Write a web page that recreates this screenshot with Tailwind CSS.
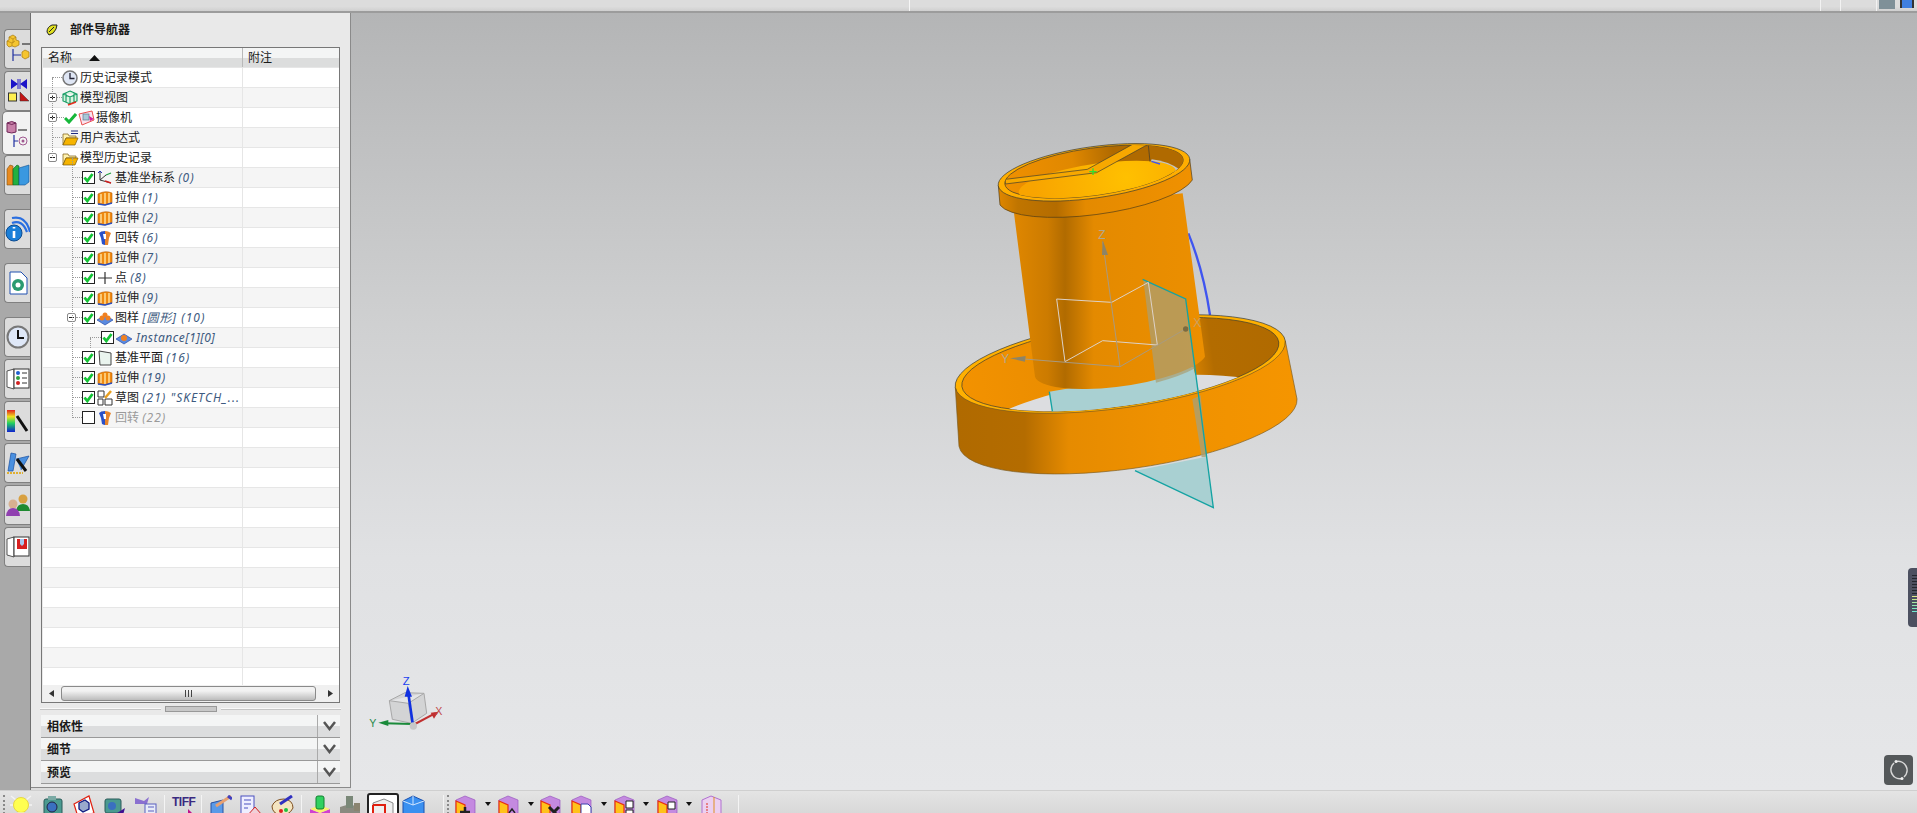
<!DOCTYPE html>
<html lang="zh">
<head>
<meta charset="UTF-8" />
<title>部件导航器</title>
<script src="https://cdn.jsdelivr.net/npm/@tailwindcss/browser@4"></script>
</head>
<body class="w-[1917px] h-[813px] overflow-hidden flex flex-col bg-[#dcdcdc] text-[12px] leading-[16px] text-[#1a1a1a] font-['Noto_Sans','Noto_Sans_CJK_SC',sans-serif]">

<!-- shared icons -->
<svg class="hidden">
  <symbol id="chk" viewBox="0 0 13 13"><rect x=".5" y=".5" width="12" height="12" fill="#fff" stroke="#222"/><path d="M2.500 6.500 5.300 10 10.500 3" fill="none" stroke="#14c436" stroke-width="2.800"/></symbol>
  <symbol id="ext" viewBox="0 0 16 16"><path d="M1 4Q8 0 15 3V13L8 15 1 14Z" fill="#f08a10" stroke="#b85a00" stroke-width=".6"/><path d="M4 4V13M8 3V14M12 3V13" stroke="#ffe3a0" stroke-width="1.400"/><path d="M1 14 8 15 15 13" stroke="#2a50c0" stroke-width="1.600" fill="none"/></symbol>
  <symbol id="rev" viewBox="0 0 16 16"><path d="M2 3Q8 -1 14 3L12 8 11 15H8V1Q4 1 2 3Z" fill="#e8842a"/><path d="M2 3 4 8 5 14Q7 15 8 15V1Q4 1 2 3Z" fill="#2a50c8"/><path d="M6 4H9V9H7Z" fill="#fff"/></symbol>
  <symbol id="plus" viewBox="0 0 9 9"><rect x=".5" y=".5" width="8" height="8" rx="1.500" fill="#fff" stroke="#888"/><path d="M2 4.500H7M4.500 2V7" stroke="#222"/></symbol>
  <symbol id="minus" viewBox="0 0 9 9"><rect x=".5" y=".5" width="8" height="8" rx="1.500" fill="#fff" stroke="#888"/><path d="M2 4.500H7" stroke="#222"/></symbol>
  <symbol id="folder" viewBox="0 0 17 16"><path d="M1 15V4H6L7 6H14V8H4L1 15Z" fill="#fff2b0" stroke="#7a5a10" stroke-width=".7"/><path d="M1 15 4 8H16L13 15Z" fill="#f6b400" stroke="#7a5a10" stroke-width=".7"/></symbol>
  <symbol id="tb" viewBox="0 0 22 22"><path d="M11 1 21 5V18L11 22 2 18V5Z" fill="#c48ae0" stroke="#9a58c0" stroke-width=".7"/><path d="M2 6 11 10V22L2 18Z" fill="#ffc21a" stroke="#e83010" stroke-width="1.200"/></symbol>
</svg>

<!-- top bar -->
<header class="h-[13px] shrink-0 flex bg-[linear-gradient(#dcdcdc_60%,#cfcfcf)] border-b-2 border-[#9c9c9c]">
  <div class="w-[1px] ml-[909px] bg-[#f6f6f6]"></div>
  <div class="w-[1px] ml-[910px] bg-[#f2f2f2]"></div>
  <div class="w-[1px] ml-[19px] bg-[#f2f2f2]"></div>
  <div class="w-[1px] ml-[35px] bg-[#f2f2f2]"></div>
  <div class="w-[16px] h-[9px] ml-[2px] bg-[#7f9098]"></div>
  <div class="w-[14px] h-[8px] ml-[5px] bg-[#3f7fe0] border-x-2 border-[#333]"></div>
</header>

<div class="flex-1 flex min-h-0">
  <!-- tab strip -->
  <nav class="w-[31px] shrink-0 pt-[16px] pb-[3px] pl-[4px] bg-[#a9a9a9] border-r border-[#6f6f6f] flex flex-col">
    <div class="h-[40px] w-[26px] mb-[2px] rounded-l-[4px] border border-r-0 border-[#808080] bg-[#dcdcdc] flex items-center justify-center">
      <svg width="24" height="30" viewBox="0 0 24 30"><path d="M3 3 7 1 10 3V6L13 7V11L9 13 6 12 3 13 1 11V7L3 6Z" fill="#f5c530" stroke="#a87a10" stroke-width=".7"/><path d="M3 3 7 5 10 3M7 5V9M1 7 6 9 9 7M6 9V12" fill="none" stroke="#a87a10" stroke-width=".6"/><path d="M7 15V27M7 21H15" stroke="#2030a0" stroke-width="1.200"/><path d="M16 18 19 16 23 18V23L19 25 16 23Z" fill="#f5c530" stroke="#a87a10" stroke-width=".7"/><path d="M16 10H24" stroke="#111"/></svg>
    </div>
    <div class="h-[40px] w-[26px] rounded-l-[4px] border border-r-0 border-[#808080] bg-[#dcdcdc] flex items-center justify-center">
      <svg width="24" height="26" viewBox="0 0 24 26"><path d="M5 1V11L12 6ZM21 1V11L14 6Z" fill="#1c14c8"/><path d="M12 1V11M14 1V11" stroke="#1c14c8"/><rect x="2.500" y="15" width="8" height="8" fill="#fff050" stroke="#333"/><path d="M14 14 23 23H14Z" fill="#c41414" stroke="#333" stroke-width=".5"/></svg>
    </div>
    <div class="h-[44px] w-[28px] -ml-[2px] -mr-[1px] relative rounded-l-[5px] border border-r-0 border-[#808080] bg-[#f2f2f2] flex items-center justify-center">
      <svg width="24" height="28" viewBox="0 0 24 28"><path d="M2 4Q7 1 11 4V13Q7 15 2 13Z" fill="#c880a8" stroke="#702858"/><path d="M2 4Q7 7 11 4" stroke="#702858" fill="none"/><path d="M13 11H22" stroke="#111"/><path d="M9 16V28M9 22H13" stroke="#2030a0" stroke-width="1.200"/><circle cx="18" cy="22" r="4" fill="none" stroke="#a05890"/><circle cx="18" cy="22" r="1.500" fill="#a05890"/></svg>
    </div>
    <div class="h-[40px] w-[26px] rounded-l-[4px] border border-r-0 border-[#808080] bg-[#dcdcdc] flex items-center justify-center">
      <svg width="24" height="24" viewBox="0 0 24 24"><path d="M1 6 4 2 7 3V22H1Z" fill="#e88a20" stroke="#805010" stroke-width=".6"/><path d="M7 6 11 2 13 3V22H7Z" fill="#22b040" stroke="#106020" stroke-width=".6"/><path d="M13 5 23 2V19L19 22H13Z" fill="#3a98e0" stroke="#105090" stroke-width=".6"/></svg>
    </div>
    <div class="h-[40px] w-[26px] mt-[14px] rounded-l-[4px] border border-r-0 border-[#808080] bg-[#dcdcdc] flex items-center justify-center">
      <svg width="25" height="26" viewBox="0 0 25 26"><path d="M7 7Q17 3 22 16M7 2Q21 -1 25 16" fill="none" stroke="#2a6fe0" stroke-width="2.200"/><circle cx="9" cy="17" r="8" fill="#1a7fd8" stroke="#0c4a90"/><path d="M9 11V12.500M9 15V22" stroke="#fff" stroke-width="2.600"/></svg>
    </div>
    <div class="h-[40px] w-[26px] mt-[14px] rounded-l-[4px] border border-r-0 border-[#808080] bg-[#dcdcdc] flex items-center justify-center">
      <svg width="20" height="24" viewBox="0 0 20 24"><path d="M2 1H13L19 7V23H2Z" fill="#fff" stroke="#2050b0"/><circle cx="10" cy="14" r="6" fill="#2a9a70"/><circle cx="10" cy="14" r="2.500" fill="#fff"/></svg>
    </div>
    <div class="h-[40px] w-[26px] mt-[14px] rounded-l-[4px] border border-r-0 border-[#808080] bg-[#dcdcdc] flex items-center justify-center">
      <svg width="24" height="24" viewBox="0 0 24 24"><circle cx="12" cy="12" r="10.500" fill="#dfe8f8" stroke="#777" stroke-width="2"/><path d="M12 5V13H18" fill="none" stroke="#111" stroke-width="2"/></svg>
    </div>
    <div class="h-[40px] w-[26px] mt-[2px] rounded-l-[4px] border border-r-0 border-[#808080] bg-[#dcdcdc] flex items-center justify-center">
      <svg width="24" height="22" viewBox="0 0 24 22"><path d="M1 3 8 1V21L1 19Z" fill="#fff" stroke="#555"/><rect x="8" y="1" width="15" height="19" fill="#fff" stroke="#333"/><circle cx="12" cy="5" r="2" fill="#2060d0"/><circle cx="12" cy="10" r="2" fill="#30a040"/><circle cx="12" cy="15" r="2" fill="#d02020"/><path d="M16 5H21M16 10H21M16 15H21" stroke="#333"/></svg>
    </div>
    <div class="h-[40px] w-[26px] mt-[2px] rounded-l-[4px] border border-r-0 border-[#808080] bg-[#dcdcdc] flex items-center justify-center">
      <svg width="24" height="24" viewBox="0 0 24 24"><defs><linearGradient id="rb" x1="0" y1="0" x2="0" y2="1"><stop offset="0" stop-color="#e02020"/><stop offset=".3" stop-color="#f0e020"/><stop offset=".6" stop-color="#20d060"/><stop offset="1" stop-color="#1020d0"/></linearGradient></defs><rect x="1" y="1" width="8" height="22" fill="url(#rb)"/><path d="M11 7 21 22" stroke="#111" stroke-width="3"/></svg>
    </div>
    <div class="h-[40px] w-[26px] mt-[2px] rounded-l-[4px] border border-r-0 border-[#808080] bg-[#dcdcdc] flex items-center justify-center">
      <svg width="24" height="24" viewBox="0 0 24 24"><path d="M5 2 10 3 7 20H2ZM10 8 23 5 15 19" fill="#4a90e0" stroke="#1a50a0" stroke-width=".7"/><path d="M1 22H17" stroke="#e0b030" stroke-dasharray="2 1" stroke-width="2"/><path d="M11 8 20 20" stroke="#111" stroke-width="3"/></svg>
    </div>
    <div class="h-[40px] w-[26px] mt-[2px] rounded-l-[4px] border border-r-0 border-[#808080] bg-[#dcdcdc] flex items-center justify-center">
      <svg width="24" height="24" viewBox="0 0 24 24"><circle cx="17" cy="6" r="4.500" fill="#d8a040"/><path d="M10 18Q11 11 17 11 23 11 24 18Z" fill="#1e8a30"/><circle cx="7" cy="11" r="4.500" fill="#d8b090"/><path d="M0 23Q1 15 7 15 13 15 14 23Z" fill="#9040b0"/></svg>
    </div>
    <div class="h-[40px] w-[26px] mt-[2px] rounded-l-[4px] border border-r-0 border-[#808080] bg-[#dcdcdc] flex items-center justify-center">
      <svg width="24" height="22" viewBox="0 0 24 22"><path d="M1 3 8 1V21L1 19Z" fill="#fff" stroke="#555"/><rect x="8" y="1" width="15" height="19" fill="#fff" stroke="#333"/><rect x="11" y="3" width="10" height="10" fill="#d82020"/><path d="M14 3H18V8L16 10 14 8Z" fill="#a8c8f0"/></svg>
    </div>
  </nav>

  <!-- part navigator panel -->
  <aside class="w-[320px] shrink-0 mb-[2px] px-[10px] bg-[#e9e9e9] border-b border-r border-[#8a8a8a] flex flex-col">
    <div class="h-[34px] shrink-0 flex items-center pl-[5px] font-bold">
      <svg width="12" height="12" viewBox="0 0 12 12"><path d="M1 8Q1 3 6 1L11 1 10 5Q8 10 3 11Z" fill="#e0e020" stroke="#222"/><path d="M3 8 8 3" stroke="#222"/></svg>
      <span class="ml-[12px]">部件导航器</span>
    </div>

    <div class="h-[656px] shrink-0 border border-[#777] flex flex-col pl-[1px]">
      <div class="h-[20px] shrink-0 flex bg-[linear-gradient(#f4f5f5_55%,#dcdddd_55%)] border-b border-[#e6e6e6]">
        <div class="w-[199px] flex items-center pl-[5px]">名称
          <svg class="ml-[17px]" width="11" height="6" viewBox="0 0 11 6"><path d="M5.500 0 11 6H0Z" fill="#111"/></svg>
        </div>
        <div class="flex-1 border-l border-[#b9b9b9] pl-[5px] flex items-center">附注</div>
      </div>

      <div class="h-[617px] shrink-0 overflow-hidden relative">
        <!-- tree guide lines -->
        <div class="absolute left-[9px] top-[10px] h-[80px] border-l border-dotted border-[#999]"></div>
        <div class="absolute left-[29px] top-[90px] h-[260px] border-l border-dotted border-[#999]"></div>
        <div class="absolute left-[47px] top-[270px] h-[10px] border-l border-dotted border-[#999]"></div>

        <div class="h-[20px] flex bg-white border-b border-[#e6e6e6]"><div class="w-[199px] flex items-center pl-[9px]"><div class="w-[10px] border-t border-dotted border-[#999]"></div><svg width="16" height="16" viewBox="0 0 16 16"><circle cx="8" cy="8" r="7" fill="#dfe6f4" stroke="#777" stroke-width="1.500"/><path d="M8 3V8.500H12.500" fill="none" stroke="#223" stroke-width="1.300"/></svg><span class="ml-[2px]">历史记录模式</span></div><div class="flex-1 border-l border-[#e6e6e6]"></div></div>
        <div class="h-[20px] flex bg-[#f5f5f5] border-b border-[#e6e6e6]"><div class="w-[199px] flex items-center pl-[5px]"><svg width="9" height="9"><use href="#plus"/></svg><div class="w-[5px] border-t border-dotted border-[#999]"></div><svg width="17" height="16" viewBox="0 0 17 16"><path d="M8 1 15 4V11L8 14 1 11V4ZM1 4 8 7 15 4M8 7V14M4 2.500V12.500M12 2.500V12.500" fill="#d8f4e0" stroke="#109a60" stroke-width="1.100"/><path d="M6 15 14 12" stroke="#e83020" stroke-width="1.500"/></svg><span class="ml-[1px]">模型视图</span></div><div class="flex-1 border-l border-[#e6e6e6]"></div></div>
        <div class="h-[20px] flex bg-white border-b border-[#e6e6e6]"><div class="w-[199px] flex items-center pl-[5px]"><svg width="9" height="9"><use href="#plus"/></svg><div class="w-[7px] border-t border-dotted border-[#999]"></div><svg width="13" height="12" viewBox="0 0 13 12"><path d="M1 6 5 10 12 2" fill="none" stroke="#16b83a" stroke-width="3"/></svg><svg class="ml-[1px]" width="17" height="16" viewBox="0 0 17 16"><path d="M1 4 14 1 16 10 4 15Z" fill="#fbe3ee" stroke="#e85050"/><rect x="5" y="4" width="6" height="6" fill="#a8c8d8" stroke="#607890" stroke-width=".7"/><path d="M11 6 16 9 12 11Z" fill="#d020a0"/></svg><span class="ml-[1px]">摄像机</span></div><div class="flex-1 border-l border-[#e6e6e6]"></div></div>
        <div class="h-[20px] flex bg-[#f5f5f5] border-b border-[#e6e6e6]"><div class="w-[199px] flex items-center pl-[9px]"><div class="w-[10px] border-t border-dotted border-[#999]"></div><svg width="17" height="16" viewBox="0 0 17 16"><use href="#folder"/><path d="M9 1H16M9 3.500H16" stroke="#202a80"/></svg><span class="ml-[1px]">用户表达式</span></div><div class="flex-1 border-l border-[#e6e6e6]"></div></div>
        <div class="h-[20px] flex bg-white border-b border-[#e6e6e6]"><div class="w-[199px] flex items-center pl-[5px]"><svg width="9" height="9"><use href="#minus"/></svg><div class="w-[5px]"></div><svg width="17" height="16"><use href="#folder"/></svg><span class="ml-[1px]">模型历史记录</span></div><div class="flex-1 border-l border-[#e6e6e6]"></div></div>

        <div class="h-[20px] flex bg-[#f5f5f5] border-b border-[#e6e6e6]"><div class="w-[199px] flex items-center pl-[29px]"><div class="w-[10px] border-t border-dotted border-[#999]"></div><svg width="13" height="13"><use href="#chk"/></svg><svg class="ml-[2px]" width="16" height="16" viewBox="0 0 16 16"><path d="M3 1V10L14 13M3 10 9 5" fill="none" stroke="#333"/><path d="M9 5 14 3" stroke="#20a040" stroke-width="1.200"/><path d="M3 1 1 3M3 1 5 3" stroke="#2030c0"/><path d="M8 11 14 13" stroke="#d02020" stroke-width="1.500"/></svg><span class="ml-[2px]">基准坐标系 <em class="text-[#3d5a80] tracking-[1px]">(0)</em></span></div><div class="flex-1 border-l border-[#e6e6e6]"></div></div>
        <div class="h-[20px] flex bg-white border-b border-[#e6e6e6]"><div class="w-[199px] flex items-center pl-[29px]"><div class="w-[10px] border-t border-dotted border-[#999]"></div><svg width="13" height="13"><use href="#chk"/></svg><svg class="ml-[2px]" width="16" height="16"><use href="#ext"/></svg><span class="ml-[2px]">拉伸 <em class="text-[#3d5a80] tracking-[1px]">(1)</em></span></div><div class="flex-1 border-l border-[#e6e6e6]"></div></div>
        <div class="h-[20px] flex bg-[#f5f5f5] border-b border-[#e6e6e6]"><div class="w-[199px] flex items-center pl-[29px]"><div class="w-[10px] border-t border-dotted border-[#999]"></div><svg width="13" height="13"><use href="#chk"/></svg><svg class="ml-[2px]" width="16" height="16"><use href="#ext"/></svg><span class="ml-[2px]">拉伸 <em class="text-[#3d5a80] tracking-[1px]">(2)</em></span></div><div class="flex-1 border-l border-[#e6e6e6]"></div></div>
        <div class="h-[20px] flex bg-white border-b border-[#e6e6e6]"><div class="w-[199px] flex items-center pl-[29px]"><div class="w-[10px] border-t border-dotted border-[#999]"></div><svg width="13" height="13"><use href="#chk"/></svg><svg class="ml-[2px]" width="16" height="16"><use href="#rev"/></svg><span class="ml-[2px]">回转 <em class="text-[#3d5a80] tracking-[1px]">(6)</em></span></div><div class="flex-1 border-l border-[#e6e6e6]"></div></div>
        <div class="h-[20px] flex bg-[#f5f5f5] border-b border-[#e6e6e6]"><div class="w-[199px] flex items-center pl-[29px]"><div class="w-[10px] border-t border-dotted border-[#999]"></div><svg width="13" height="13"><use href="#chk"/></svg><svg class="ml-[2px]" width="16" height="16"><use href="#ext"/></svg><span class="ml-[2px]">拉伸 <em class="text-[#3d5a80] tracking-[1px]">(7)</em></span></div><div class="flex-1 border-l border-[#e6e6e6]"></div></div>
        <div class="h-[20px] flex bg-white border-b border-[#e6e6e6]"><div class="w-[199px] flex items-center pl-[29px]"><div class="w-[10px] border-t border-dotted border-[#999]"></div><svg width="13" height="13"><use href="#chk"/></svg><svg class="ml-[2px]" width="16" height="16" viewBox="0 0 16 16"><path d="M8 2V14M1 8H15" stroke="#333" stroke-width="1.200"/></svg><span class="ml-[2px]">点 <em class="text-[#3d5a80] tracking-[1px]">(8)</em></span></div><div class="flex-1 border-l border-[#e6e6e6]"></div></div>
        <div class="h-[20px] flex bg-[#f5f5f5] border-b border-[#e6e6e6]"><div class="w-[199px] flex items-center pl-[29px]"><div class="w-[10px] border-t border-dotted border-[#999]"></div><svg width="13" height="13"><use href="#chk"/></svg><svg class="ml-[2px]" width="16" height="16"><use href="#ext"/></svg><span class="ml-[2px]">拉伸 <em class="text-[#3d5a80] tracking-[1px]">(9)</em></span></div><div class="flex-1 border-l border-[#e6e6e6]"></div></div>
        <div class="h-[20px] flex bg-white border-b border-[#e6e6e6]"><div class="w-[199px] flex items-center pl-[24px]"><svg width="9" height="9"><use href="#minus"/></svg><div class="w-[6px] border-t border-dotted border-[#999]"></div><svg width="13" height="13"><use href="#chk"/></svg><svg class="ml-[2px]" width="16" height="16" viewBox="0 0 16 16"><path d="M0 10 8 5 16 10 8 15Z" fill="#5a8ae0" stroke="#1a40a0" stroke-width=".6"/><circle cx="5" cy="8" r="2.500" fill="#f08020"/><circle cx="11" cy="8" r="2.500" fill="#f08020"/><circle cx="8" cy="5" r="2.500" fill="#f08020"/></svg><span class="ml-[2px]">图样 <em class="text-[#3d5a80] tracking-[1px]">[圆形] (10)</em></span></div><div class="flex-1 border-l border-[#e6e6e6]"></div></div>
        <div class="h-[20px] flex bg-[#f5f5f5] border-b border-[#e6e6e6]"><div class="w-[199px] flex items-center pl-[47px]"><div class="w-[11px] border-t border-dotted border-[#999]"></div><svg width="13" height="13"><use href="#chk"/></svg><svg class="ml-[2px]" width="16" height="16" viewBox="0 0 16 16"><path d="M0 9 8 4 16 9 8 14Z" fill="#5a8ae0" stroke="#1a40a0" stroke-width=".6"/><circle cx="8" cy="8" r="3" fill="#f08020"/></svg><em class="ml-[4px] text-[#3d5a80] tracking-[.5px]">Instance[1][0]</em></div><div class="flex-1 border-l border-[#e6e6e6]"></div></div>
        <div class="h-[20px] flex bg-white border-b border-[#e6e6e6]"><div class="w-[199px] flex items-center pl-[29px]"><div class="w-[10px] border-t border-dotted border-[#999]"></div><svg width="13" height="13"><use href="#chk"/></svg><svg class="ml-[2px]" width="16" height="16" viewBox="0 0 16 16"><path d="M2 1 14 3V15H3Z" fill="#eaf4ee" stroke="#444"/></svg><span class="ml-[2px]">基准平面 <em class="text-[#3d5a80] tracking-[1px]">(16)</em></span></div><div class="flex-1 border-l border-[#e6e6e6]"></div></div>
        <div class="h-[20px] flex bg-[#f5f5f5] border-b border-[#e6e6e6]"><div class="w-[199px] flex items-center pl-[29px]"><div class="w-[10px] border-t border-dotted border-[#999]"></div><svg width="13" height="13"><use href="#chk"/></svg><svg class="ml-[2px]" width="16" height="16"><use href="#ext"/></svg><span class="ml-[2px]">拉伸 <em class="text-[#3d5a80] tracking-[1px]">(19)</em></span></div><div class="flex-1 border-l border-[#e6e6e6]"></div></div>
        <div class="h-[20px] flex bg-white border-b border-[#e6e6e6]"><div class="w-[199px] flex items-center pl-[29px]"><div class="w-[10px] border-t border-dotted border-[#999]"></div><svg width="13" height="13"><use href="#chk"/></svg><svg class="ml-[2px]" width="16" height="16" viewBox="0 0 16 16"><path d="M1 1H7V7H1ZM1 9H6V15H1ZM8 9H15V15H8Z" fill="#fff" stroke="#333"/><path d="M8 8 14 1" stroke="#e8a020" stroke-width="2.500"/></svg><span class="ml-[2px] whitespace-nowrap">草图 <em class="text-[#3d5a80] tracking-[1px]">(21) "SKETCH_...</em></span></div><div class="flex-1 border-l border-[#e6e6e6]"></div></div>
        <div class="h-[20px] flex bg-[#f5f5f5] border-b border-[#e6e6e6]"><div class="w-[199px] flex items-center pl-[29px]"><div class="w-[10px] border-t border-dotted border-[#999]"></div><svg width="13" height="13" viewBox="0 0 13 13"><rect x=".5" y=".5" width="12" height="12" fill="#fff" stroke="#222"/></svg><svg class="ml-[2px]" width="16" height="16"><use href="#rev"/></svg><span class="ml-[2px] text-[#9a9a9a]">回转 <em class="tracking-[1px]">(22)</em></span></div><div class="flex-1 border-l border-[#e6e6e6]"></div></div>

        <div class="h-[20px] flex bg-white border-b border-[#e6e6e6]"><div class="w-[199px]"></div><div class="flex-1 border-l border-[#e6e6e6]"></div></div>
        <div class="h-[20px] flex bg-[#f5f5f5] border-b border-[#e6e6e6]"><div class="w-[199px]"></div><div class="flex-1 border-l border-[#e6e6e6]"></div></div>
        <div class="h-[20px] flex bg-white border-b border-[#e6e6e6]"><div class="w-[199px]"></div><div class="flex-1 border-l border-[#e6e6e6]"></div></div>
        <div class="h-[20px] flex bg-[#f5f5f5] border-b border-[#e6e6e6]"><div class="w-[199px]"></div><div class="flex-1 border-l border-[#e6e6e6]"></div></div>
        <div class="h-[20px] flex bg-white border-b border-[#e6e6e6]"><div class="w-[199px]"></div><div class="flex-1 border-l border-[#e6e6e6]"></div></div>
        <div class="h-[20px] flex bg-[#f5f5f5] border-b border-[#e6e6e6]"><div class="w-[199px]"></div><div class="flex-1 border-l border-[#e6e6e6]"></div></div>
        <div class="h-[20px] flex bg-white border-b border-[#e6e6e6]"><div class="w-[199px]"></div><div class="flex-1 border-l border-[#e6e6e6]"></div></div>
        <div class="h-[20px] flex bg-[#f5f5f5] border-b border-[#e6e6e6]"><div class="w-[199px]"></div><div class="flex-1 border-l border-[#e6e6e6]"></div></div>
        <div class="h-[20px] flex bg-white border-b border-[#e6e6e6]"><div class="w-[199px]"></div><div class="flex-1 border-l border-[#e6e6e6]"></div></div>
        <div class="h-[20px] flex bg-[#f5f5f5] border-b border-[#e6e6e6]"><div class="w-[199px]"></div><div class="flex-1 border-l border-[#e6e6e6]"></div></div>
        <div class="h-[20px] flex bg-white border-b border-[#e6e6e6]"><div class="w-[199px]"></div><div class="flex-1 border-l border-[#e6e6e6]"></div></div>
        <div class="h-[20px] flex bg-[#f5f5f5] border-b border-[#e6e6e6]"><div class="w-[199px]"></div><div class="flex-1 border-l border-[#e6e6e6]"></div></div>
        <div class="h-[20px] flex bg-white"><div class="w-[199px]"></div><div class="flex-1 border-l border-[#e6e6e6]"></div></div>
      </div>

      <!-- horizontal scrollbar -->
      <div class="flex-1 flex items-center bg-[#f0f0f0]">
        <svg class="ml-[6px]" width="5" height="7" viewBox="0 0 5 7"><path d="M5 0V7L0 3.500Z" fill="#333"/></svg>
        <div class="ml-[7px] w-[255px] h-[15px] rounded-[3px] border border-[#8a8a8a] bg-[linear-gradient(#f2f2f2_30%,#bcbcbc)] flex items-center justify-center gap-[2px]">
          <div class="w-[1px] h-[7px] bg-[#444]"></div><div class="w-[1px] h-[7px] bg-[#444]"></div><div class="w-[1px] h-[7px] bg-[#444]"></div>
        </div>
        <svg class="ml-[12px]" width="5" height="7" viewBox="0 0 5 7"><path d="M0 0V7L5 3.500Z" fill="#333"/></svg>
      </div>
    </div>

    <!-- sash -->
    <div class="h-[12px] shrink-0 -mx-[1px] flex items-center">
      <div class="flex-1 h-[2px] bg-[#f8f8f8] border-b border-[#c4c4c4]"></div>
      <div class="w-[52px] h-[6px] mx-[4px] bg-[#c8c8c8] border border-[#999]"></div>
      <div class="flex-1 h-[2px] bg-[#f8f8f8] border-b border-[#c4c4c4]"></div>
    </div>

    <div class="h-[23px] shrink-0 flex border-b border-[#999] bg-[linear-gradient(#f4f5f5_50%,#dcddde_50%)] font-bold">
      <div class="flex-1 pl-[6px] pt-[2px] flex items-center">相依性</div>
      <div class="w-[23px] border-l border-[#aaa] flex items-center justify-center"><svg width="13" height="10" viewBox="0 0 13 10"><path d="M1 1 6.500 8 12 1" fill="none" stroke="#555" stroke-width="2.500"/></svg></div>
    </div>
    <div class="h-[23px] shrink-0 flex border-b border-[#999] bg-[linear-gradient(#f4f5f5_50%,#dcddde_50%)] font-bold">
      <div class="flex-1 pl-[6px] pt-[2px] flex items-center">细节</div>
      <div class="w-[23px] border-l border-[#aaa] flex items-center justify-center"><svg width="13" height="10" viewBox="0 0 13 10"><path d="M1 1 6.500 8 12 1" fill="none" stroke="#555" stroke-width="2.500"/></svg></div>
    </div>
    <div class="h-[23px] shrink-0 flex border-b border-[#999] bg-[linear-gradient(#f4f5f5_50%,#dcddde_50%)] font-bold">
      <div class="flex-1 pl-[6px] pt-[2px] flex items-center">预览</div>
      <div class="w-[23px] border-l border-[#aaa] flex items-center justify-center"><svg width="13" height="10" viewBox="0 0 13 10"><path d="M1 1 6.500 8 12 1" fill="none" stroke="#555" stroke-width="2.500"/></svg></div>
    </div>
  </aside>

  <!-- graphics window -->
  <main class="flex-1 relative bg-[linear-gradient(#b4b5b6,#cfd0d1_40%,#e0e1e3_70%,#e6e7e9)]">
    <svg class="absolute left-[579px] top-[107px]" width="400" height="400" viewBox="0 0 1200 1200">
      <defs>
        <linearGradient id="band" gradientUnits="userSpaceOnUse" x1="80" y1="0" x2="1100" y2="0"><stop offset="0" stop-color="#b06a00"/><stop offset=".2" stop-color="#b46c00"/><stop offset=".33" stop-color="#e68b00"/><stop offset=".6" stop-color="#ef9100"/><stop offset="1" stop-color="#f59500"/></linearGradient>
        <linearGradient id="backwall" gradientUnits="userSpaceOnUse" x1="80" y1="0" x2="1065" y2="0"><stop offset="0" stop-color="#f39200"/><stop offset=".7" stop-color="#e08700"/><stop offset=".78" stop-color="#b36c00"/><stop offset="1" stop-color="#b06a00"/></linearGradient>
        <linearGradient id="cyl" gradientUnits="userSpaceOnUse" x1="250" y1="0" x2="825" y2="0"><stop offset="0" stop-color="#e08700"/><stop offset=".18" stop-color="#cc7b00"/><stop offset=".27" stop-color="#b16b00"/><stop offset=".42" stop-color="#e48a00"/><stop offset="1" stop-color="#ec8f00"/></linearGradient>
        <linearGradient id="collar" gradientUnits="userSpaceOnUse" x1="205" y1="0" x2="787" y2="0"><stop offset="0" stop-color="#e08700"/><stop offset=".1" stop-color="#c07500"/><stop offset=".3" stop-color="#b46c00"/><stop offset=".45" stop-color="#e48a00"/><stop offset="1" stop-color="#f09100"/></linearGradient>
        <linearGradient id="capwall" gradientUnits="userSpaceOnUse" x1="225" y1="0" x2="640" y2="0"><stop offset="0" stop-color="#f09000"/><stop offset=".5" stop-color="#e08800"/><stop offset=".8" stop-color="#b06a00"/><stop offset="1" stop-color="#b06a00"/></linearGradient>
        <radialGradient id="disc" gradientUnits="userSpaceOnUse" cx="590" cy="185" r="280"><stop offset="0" stop-color="#ffc000"/><stop offset="1" stop-color="#f8a400"/></radialGradient>
        <clipPath id="capin"><ellipse cx="492" cy="155" rx="270" ry="71" transform="rotate(-8 492 155)"/></clipPath>
        <clipPath id="ringin"><ellipse cx="571" cy="733" rx="480" ry="125" transform="rotate(-8 571 733)"/></clipPath>
      </defs>

      <!-- sketch curve behind the cylinder -->
      <path d="M775 340Q820 450 840 585" fill="none" stroke="#3f55f0" stroke-width="7"/>

      <!-- ring rim, back wall and opening -->
      <ellipse cx="571" cy="733" rx="500" ry="133" transform="rotate(-8 571 733)" fill="#ffb000" stroke="#3a3a30" stroke-width="2"/>
      <ellipse cx="571" cy="733" rx="480" ry="125" transform="rotate(-8 571 733)" fill="url(#backwall)" stroke="#3a3a30" stroke-width="2"/>
      <g clip-path="url(#ringin)">
        <ellipse cx="590" cy="905" rx="480" ry="125" transform="rotate(-8 590 905)" fill="#dcdde0"/>
        <path d="M358 815 370 910 820 870 790 740Z" fill="#a9d0d2"/>
        <path d="M358 815 370 892" stroke="#14a3a3" stroke-width="4"/>
      </g>

      <!-- cylinder -->
      <path d="M252 280 315 770A260 68 -8 0 0 825 710L758 220Z" fill="url(#cyl)"/>

      <!-- plane over the cylinder -->
      <path d="M640 480 767 537 795 745Q750 770 678 788Z" fill="#a9a074" fill-opacity=".72"/>
      <path d="M638 478 767 537 795 745" fill="none" stroke="#14a3a3" stroke-width="4"/>

      <!-- csys wireframe -->
      <path d="M380 537 545 547 655 487 682 675 518 662 405 725Z" fill="none" stroke="#ddd2c8" stroke-width="3"/>
      <path d="M570 740 518 365M570 740 270 716M570 740 770 625" stroke="#a89a80" stroke-width="3" fill="none"/>
      <path d="M518 360 534 405H516Z" fill="#8c8468"/>
      <path d="M240 715 287 708 285 725Z" fill="#8c8468"/>
      <circle cx="767" cy="627" r="8" fill="#7a6a40"/>
      <text x="505" y="356" font-size="36" fill="#b0a890" font-family="Liberation Sans">Z</text>
      <text x="214" y="730" font-size="36" fill="#b0a890" font-family="Liberation Sans">Y</text>
      <text x="790" y="620" font-size="36" fill="#c8a060" font-family="Liberation Sans">X</text>

      <!-- ring front band -->
      <path d="M76 803A500 133 -8 0 0 1066 663L1101 837A512 140 -8 0 1 87 979Z" fill="url(#band)" stroke="#7a5a20" stroke-width="2"/>

      <!-- plane over the ring -->
      <path d="M787 838 812 826 830 1010 815 1012Z" fill="#a9a074" fill-opacity=".8"/>
      <path d="M615 1052 830 1010 850 1163Z" fill="#a9d0d2"/>
      <path d="M795 745 850 1163 615 1052" fill="none" stroke="#14a3a3" stroke-width="4"/>

      <!-- collar and top rim -->
      <path d="M205 197A290 77 -8 0 0 779 117L787 180A296 80 -8 0 1 210 255Z" fill="url(#collar)" stroke="#4a3a18" stroke-width="2"/>
      <ellipse cx="492" cy="157" rx="290" ry="77" transform="rotate(-8 492 157)" fill="#ffae00" stroke="#3a3a30" stroke-width="2"/>
      <ellipse cx="492" cy="155" rx="270" ry="71" transform="rotate(-8 492 155)" fill="url(#capwall)" stroke="#3a3a30" stroke-width="2"/>
      <g clip-path="url(#capin)">
        <path d="M650 70 770 90 750 160 660 130Z" fill="#b06a00"/>
        <path d="M665 118Q710 122 752 150L745 160 660 132Z" fill="#c2c3c3"/>
        <path d="M335 168 470 150 480 156 345 172Z" fill="#c8c9c9"/>
        <ellipse cx="502" cy="185" rx="238" ry="54" transform="rotate(-8 502 185)" fill="url(#disc)"/>
        <path d="M624 64 656 72 500 158 226 192 226 178 472 148Z" fill="#f7a800" stroke="#3a3a30" stroke-width="2"/>
        <path d="M655 75 660 125" stroke="#3a3a30" stroke-width="2"/>
      </g>
      <path d="M478 155H500M489 145V165" stroke="#30e030" stroke-width="4"/>
      <path d="M664 124 690 132" stroke="#3f55f0" stroke-width="4"/>
    </svg>

    <!-- view triad -->
    <svg class="absolute left-[9px] top-[647px]" width="100" height="80" viewBox="0 0 300 240">
      <path d="M88 122 135 98 192 100 200 160 155 190 97 178ZM88 122 145 130 192 100M145 130 155 190" fill="#c8c8ca" fill-opacity=".6" stroke="#a8a8a8" stroke-width="3"/>
      <path d="M158 190 145 100" stroke="#1030e0" stroke-width="8"/><path d="M143 78 156 110H134Z" fill="#1030e0"/>
      <path d="M155 192 75 190" stroke="#1a8a3a" stroke-width="6"/><path d="M55 188 85 180V198Z" fill="#1a8a3a"/>
      <path d="M165 192 225 160" stroke="#c03030" stroke-width="6"/><path d="M235 155 212 158 222 176Z" fill="#c03030"/>
      <circle cx="160" cy="198" r="11" fill="#c8c8c8"/>
      <text x="128" y="74" font-size="34" fill="#2040f0" font-family="Liberation Sans">Z</text>
      <text x="28" y="200" font-size="32" fill="#2a8a4a" font-family="Liberation Sans">Y</text>
      <text x="226" y="164" font-size="32" fill="#c04848" font-family="Liberation Sans">X</text>
    </svg>

    <!-- status meter on the right edge -->
    <div class="absolute right-0 top-[555px] w-[9px] h-[59px] pt-[7px] pl-[4px] rounded-l-[4px] bg-[#4c5060] flex flex-col gap-[2px]">
      <div class="h-[1px] w-[5px] bg-[#23262e]"></div><div class="h-[1px] w-[5px] bg-[#23262e]"></div><div class="h-[1px] w-[5px] bg-[#23262e]"></div><div class="h-[1px] w-[5px] bg-[#23262e]"></div><div class="h-[1px] w-[5px] bg-[#23262e]"></div><div class="h-[1px] w-[5px] bg-[#23262e]"></div><div class="h-[1px] w-[5px] bg-[#23262e]"></div>
      <div class="h-[1px] w-[5px] bg-[#dfe88a]"></div><div class="h-[1px] w-[5px] bg-[#c4e890]"></div><div class="h-[1px] w-[5px] bg-[#a8e8a0]"></div><div class="h-[1px] w-[5px] bg-[#90e8b0]"></div><div class="h-[1px] w-[5px] bg-[#80e8c0]"></div><div class="h-[1px] w-[5px] bg-[#70e8d0]"></div>
    </div>

    <!-- refresh button -->
    <div class="absolute left-[1533px] top-[742px] w-[29px] h-[30px] rounded-[4px] bg-[#54585a] flex items-center justify-center">
      <svg width="22" height="22" viewBox="0 0 22 22"><path d="M6 4A9 9 0 0 0 14 19.500M16 18A9 9 0 0 0 8 2.500" fill="none" stroke="#d8d8d8" stroke-width="1.600"/><circle cx="8" cy="2.500" r="1.500" fill="#eee"/><circle cx="14" cy="19.500" r="1.500" fill="#eee"/></svg>
    </div>
  </main>
</div>

<!-- bottom toolbar -->
<footer class="h-[23px] shrink-0 flex overflow-hidden bg-[linear-gradient(#e4e4e4,#d8d8d8)] border-t border-[#cfcfcf]">
  <div class="flex items-start pt-[4px] pl-[3px]">
    <div class="w-[2px] h-[19px] border-l-2 border-dotted border-[#888]"></div>
    <svg class="ml-[5px]" width="22" height="22" viewBox="0 0 22 22"><path d="M1 1 6 5M21 1 16 5M0 10H3M19 10H22" stroke="#f4f4f4" stroke-width="1.500"/><circle cx="11" cy="10" r="7.500" fill="#ffff50" stroke="#e8d840"/><path d="M8 17H14V22H8Z" fill="#f0f0a0"/></svg>
    <svg class="ml-[11px]" width="20" height="22" viewBox="0 0 20 22"><rect x="1" y="4" width="18" height="16" rx="2" fill="#4a9a90" stroke="#2a5a58"/><circle cx="9" cy="12" r="5" fill="#3a70c0" stroke="#224"/><rect x="5" y="1" width="8" height="4" fill="#7aaaa4"/></svg>
    <svg class="ml-[10px]" width="22" height="22" viewBox="0 0 22 22"><path d="M1 9 16 1 21 18 5 22Z" fill="#fff" stroke="#e02010" stroke-width="1.200"/><path d="M6 8 12 5 16 8V14L10 17 6 14Z" fill="#9ac" stroke="#101a80" stroke-width="1.300"/></svg>
    <svg class="ml-[9px]" width="22" height="22" viewBox="0 0 22 22"><rect x="1" y="4" width="16" height="14" rx="2" fill="#4a9a90" stroke="#2a5a58"/><circle cx="8" cy="11" r="4" fill="#3a70c0"/><path d="M10 20 21 13 19 20Z" fill="#401090"/></svg>
    <svg class="ml-[9px]" width="22" height="22" viewBox="0 0 22 22"><path d="M0 3 9 6 14 2 12 9 0 9Z" fill="#8a70d0"/><rect x="10" y="9" width="11" height="13" fill="#e8ecf8" stroke="#5a60c0"/><path d="M13 12H19M13 16H19" stroke="#5a60c0"/></svg>
    <div class="w-[1px] h-[19px] ml-[7px] bg-[#aaa] border-r border-[#f4f4f4]"></div>
    <div class="ml-[7px] w-[22px] font-bold text-[12px] leading-[14px] text-[#3a2a80] font-['Liberation_Sans',sans-serif] tracking-[-0.500px]">TIFF<svg class="ml-[16px]" width="6" height="6" viewBox="0 0 6 6"><path d="M0 0 6 6H0Z" fill="#c0108a"/></svg></div>
    <div class="w-[1px] h-[19px] ml-[7px] bg-[#aaa] border-r border-[#f4f4f4]"></div>
    <svg class="ml-[8px]" width="22" height="22" viewBox="0 0 22 22"><path d="M1 8 13 5V20H1Z" fill="#5a9ae8" stroke="#2a50a0"/><path d="M6 11 21 1" stroke="#e8a070" stroke-width="3"/><path d="M18 1 22 4" stroke="#4040c0" stroke-width="3"/></svg>
    <svg class="ml-[8px]" width="22" height="22" viewBox="0 0 22 22"><rect x="1" y="1" width="13" height="18" fill="#eef" stroke="#4a50c0"/><path d="M4 5H11M4 9H11M4 13H8" stroke="#4a50c0"/><path d="M7 21 15 12 22 20Z" fill="#f0d0d8" stroke="#d02020"/></svg>
    <svg class="ml-[9px]" width="23" height="22" viewBox="0 0 23 22"><path d="M1 11Q4 4 13 4 22 5 22 13 18 21 9 20 1 18 1 11Z" fill="#f4e4c0" stroke="#805020"/><circle cx="15" cy="15" r="2" fill="#20c040"/><circle cx="10" cy="16" r="2" fill="#e02020"/><path d="M9 9 21 1" stroke="#3030c0" stroke-width="3"/></svg>
    <div class="w-[1px] h-[19px] ml-[7px] bg-[#aaa] border-r border-[#f4f4f4]"></div>
    <svg class="ml-[7px]" width="22" height="22" viewBox="0 0 22 22"><path d="M1 14 11 18 21 14V22H1Z" fill="#d040d0"/><path d="M1 14 11 10 21 14 11 18Z" fill="#f8f070"/><rect x="7" y="1" width="8" height="13" rx="2" fill="#30d060" stroke="#108030"/></svg>
    <svg class="ml-[8px]" width="23" height="22" viewBox="0 0 23 22"><path d="M1 12 11 9 21 13V22H1Z" fill="#8a8a80"/><rect x="7" y="1" width="7" height="12" fill="#7a8878"/><rect x="15" y="8" width="6" height="8" fill="#8a8470"/></svg>
  </div>
  <div class="ml-[5px] mt-[2px] w-[32px] h-[30px] rounded-[3px] border-2 border-[#222] bg-white flex items-start justify-center pt-[3px]">
    <svg width="22" height="20" viewBox="0 0 22 20"><path d="M1 5 12 1 21 5V20H1Z" fill="#eee" stroke="#888"/><path d="M1 7 13 7V20M1 7V20" fill="none" stroke="#e02010" stroke-width="2"/></svg>
  </div>
  <div class="flex items-start pt-[4px]">
    <svg class="ml-[3px]" width="23" height="22" viewBox="0 0 23 22"><path d="M11 1 22 6V20L11 22 1 20V6Z" fill="#3a90f0" stroke="#1a50b0"/><path d="M1 6 11 10 22 6M11 1 11 10" stroke="#cfe4ff" fill="none"/></svg>
    <div class="w-[1px] h-[19px] ml-[18px] bg-[#aaa] border-r border-[#f4f4f4]"></div>
    <div class="ml-[3px] w-[2px] h-[19px] border-l-2 border-dotted border-[#888]"></div>
    <svg class="ml-[5px]" width="22" height="22"><use href="#tb"/><path d="M11 12V22M6 17H16" stroke="#222" stroke-width="2.500"/></svg>
    <svg class="ml-[9px] mt-[7px]" width="6" height="4" viewBox="0 0 6 4"><path d="M0 0H6L3 4Z" fill="#111"/></svg>
    <svg class="ml-[6px]" width="22" height="22"><use href="#tb"/><path d="M12 18 15 14 18 18" stroke="#222" fill="none" stroke-width="1.500"/></svg>
    <svg class="ml-[9px] mt-[7px]" width="6" height="4" viewBox="0 0 6 4"><path d="M0 0H6L3 4Z" fill="#111"/></svg>
    <svg class="ml-[5px]" width="22" height="22"><use href="#tb"/><path d="M10 12 20 22M20 12 14 18" stroke="#222" stroke-width="3"/></svg>
    <svg class="ml-[9px]" width="22" height="22"><use href="#tb"/><path d="M11 9H18L21 12V22H11Z" fill="#fff" stroke="#3a40b0"/></svg>
    <svg class="ml-[9px] mt-[7px]" width="6" height="4" viewBox="0 0 6 4"><path d="M0 0H6L3 4Z" fill="#111"/></svg>
    <svg class="ml-[6px]" width="22" height="22"><use href="#tb"/><path d="M13 6H20V13H13ZM13 15H20V22H13Z" fill="#fff" stroke="#222"/></svg>
    <svg class="ml-[8px] mt-[7px]" width="6" height="4" viewBox="0 0 6 4"><path d="M0 0H6L3 4Z" fill="#111"/></svg>
    <svg class="ml-[7px]" width="22" height="22"><use href="#tb"/><path d="M12 7H19V14H12Z" fill="#fff" stroke="#222"/><path d="M8 19H20" stroke="#222" stroke-width="2" stroke-dasharray="2 2"/></svg>
    <svg class="ml-[8px] mt-[7px]" width="6" height="4" viewBox="0 0 6 4"><path d="M0 0H6L3 4Z" fill="#111"/></svg>
    <svg class="ml-[8px]" width="22" height="22" viewBox="0 0 22 22"><path d="M11 1 21 5V22H2V5Z" fill="#ecd0f0" stroke="#b070d0"/><path d="M7 8V22" stroke="#e03020" stroke-dasharray="2 1"/><path d="M14 2V20" stroke="#e09020"/></svg>
    <div class="w-[1px] h-[19px] ml-[16px] bg-[#aaa] border-r border-[#f4f4f4]"></div>
  </div>
</footer>
</body>
</html>
